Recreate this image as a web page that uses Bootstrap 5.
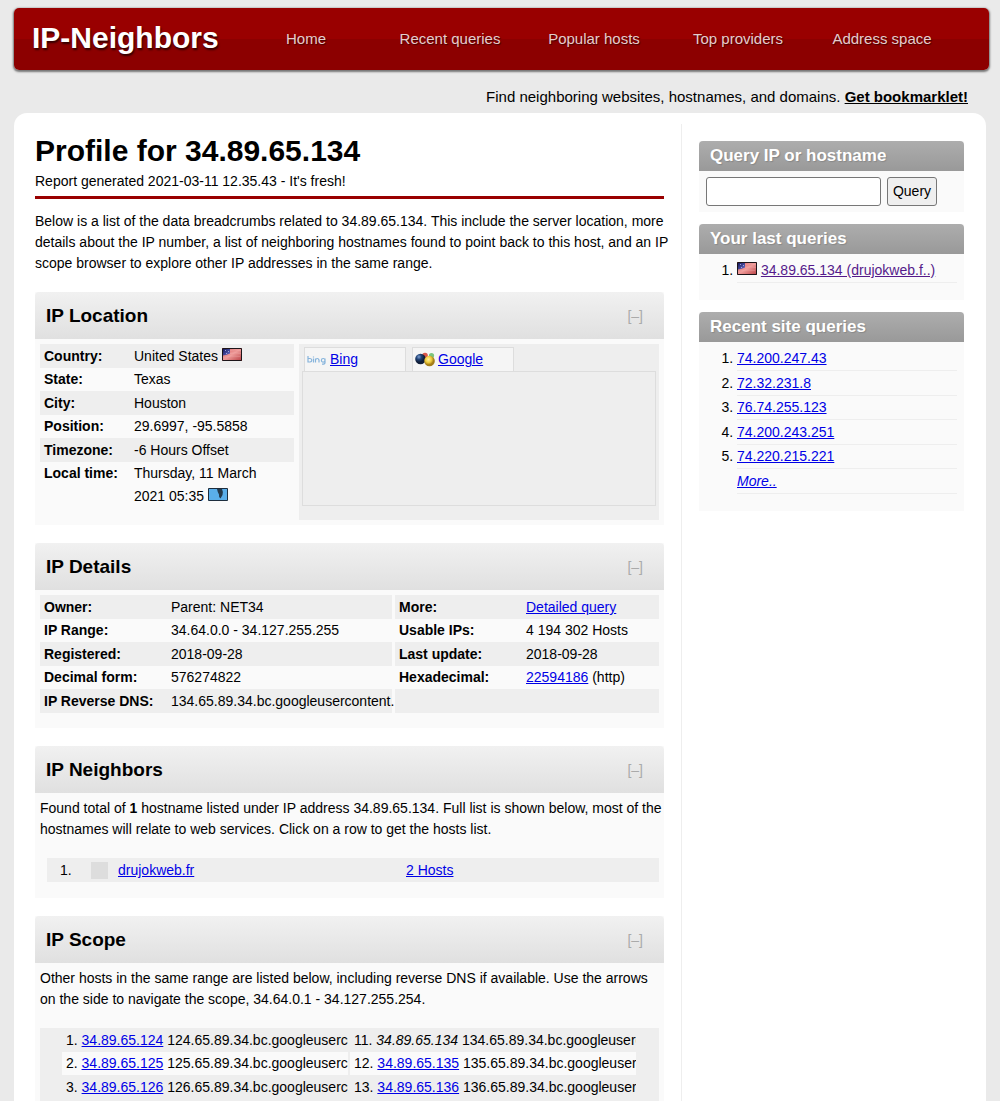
<!DOCTYPE html>
<html lang="en">
<head>
<meta charset="utf-8">
<meta name="viewport" content="width=device-width, initial-scale=1">
<title>IP-Neighbors</title>
<link href="https://cdn.jsdelivr.net/npm/bootstrap@5.3.0/dist/css/bootstrap.min.css" rel="stylesheet">
<style>
body{font-family:"Liberation Sans",Arial,sans-serif;font-size:14px;line-height:21px;color:#000;background:#eaeaea;padding:8px 14px 0}
a{color:#0000e6}
a.seen{color:#551a8b}
.topbar{height:62px;margin-right:-3px;padding:0 35px 2px 18px;border-radius:5px;background:linear-gradient(#990000 50%,#8c0000 50%);box-shadow:0 1px 2px 1px #777}
.brand{width:202px;font-size:30px;line-height:36px;font-weight:bold;color:#fff;text-decoration:none;text-shadow:1px 2px 2px #300}
.topnav a{color:#e6cccc;font-size:15px;padding:0;text-shadow:1px 1px 1px #400}
.topnav a:hover{color:#fff}
.tagline{height:43px;padding:10px 18px 0 0;font-size:15px}
.sheet{background:#fff;border-radius:13px 13px 0 0}
.maincol{padding:20px 17px 0 21px;overflow:hidden}
.sidecol{width:305px;margin-top:11px;padding:17px 22px 0 17px;border-left:1px solid #eee}
h1{font-size:30px;line-height:36px;font-weight:bold;margin:0}
.report{margin:2px 0 12px;padding:0 0 4px;border-bottom:3px solid #990000}
.intro{margin:0 -8px 18px 0}
.panel{background:#fafafa;margin-bottom:18px}
.panel-head{height:47px;padding:0 21px 0 11px;border-radius:4px 4px 0 0;background:linear-gradient(#f1f1f1,#e0e0e0)}
.panel-head h2{font-size:19px;line-height:24px;font-weight:bold;margin:0}
.fold{border:0;background:none;color:#aaa;padding:0;line-height:20px}
.panel-body{padding:5px}
.panel-text{margin:0 -4px 18px 0}
.facts{border-collapse:collapse;table-layout:fixed}
.facts th,.facts td{padding:0 0 0 4px;line-height:23px;vertical-align:top;white-space:nowrap}
.facts td{padding-left:3px}
.facts tr:nth-child(odd) th,.facts tr:nth-child(odd) td{background:#eee;line-height:24px}
.place{width:254px}
.place th{width:91px}
.facts.place tr:last-child td{white-space:normal;line-height:23px;padding-right:20px}
.place tr:last-child td,.place tr:last-child th{background:none}
.details{gap:3px;padding-bottom:15px}
.details th{width:128px}
.d-left{flex:0 0 352px}
.d-right{flex:1 1 0;min-width:0}
.flag{display:inline-block;vertical-align:0}
.mapbox{background:#eee;padding:3px 3px 14px}
.maptabs{padding-left:2px;gap:6px}
.maptab{width:102px;height:24px;border:1px solid #ddd;border-bottom:0;background:#f5f5f5;padding-left:2px;gap:3px}
.mapview{height:135px;border:1px solid #ddd}
.placegap{gap:5px}
.hosts{background:#eee;margin:0 0 11px 7px;height:24px;line-height:24px}
.hosts .num{width:44px;padding-left:13px}
.hosts .thumb{width:17px;height:17px;background:#ddd;margin-right:10px}
.hosts .name{width:288px}
.scopelist{background:#eee;padding:0 23px 0 22px;gap:2px}
.scopelist ol{flex:1 1 0;min-width:0;margin:0;padding:0;list-style:none;counter-reset:n}
.scopelist ol.second{counter-reset:n 10}
.scopelist li{counter-increment:n;height:24px;line-height:24px;white-space:nowrap;overflow:hidden;padding-left:4px}
.scopelist li:nth-child(even){background:#fafafa;height:23px;line-height:23px}
.scopelist li::before{content:counter(n) ". "}
.box-side{background:#fafafa;margin-bottom:12px}
.box-side h2{height:30px;margin:0;padding:0 11px;font-size:17px;line-height:29px;font-weight:bold;color:#fff;border-radius:4px 4px 0 0;background:linear-gradient(#adadad,#999);text-shadow:1px 1px 1px #888}
.askform{padding:6px 7px;gap:6px}
.askform input{width:175px;height:29px;border:1px solid #777;border-radius:3px;background:#fff}
.askform button{width:50px;height:29px;border:1px solid #777;border-radius:3px;background:#efefef;padding:0}
.box-side ol{margin:0;padding:5px 7px 17px 38px}
.box-side li{line-height:23px;border-bottom:1px solid #eee}
.box-side li:nth-child(even){line-height:24px}
.box-side li.plain{list-style:none}
</style>
</head>
<body class="d-flex flex-column min-vh-100">
<header class="topbar d-flex align-items-center">
  <a class="brand" href="#">IP-Neighbors</a>
  <nav class="topnav nav nav-fill flex-nowrap flex-fill">
    <a class="nav-link w-100" href="#">Home</a>
    <a class="nav-link w-100" href="#">Recent queries</a>
    <a class="nav-link w-100" href="#">Popular hosts</a>
    <a class="nav-link w-100" href="#">Top providers</a>
    <a class="nav-link w-100" href="#">Address space</a>
  </nav>
</header>
<p class="tagline d-flex align-items-center justify-content-end m-0"><span>Find neighboring websites, hostnames, and domains. <a href="#" class="fw-bold text-black">Get bookmarklet!</a></span></p>

<svg width="0" height="0" class="position-absolute" aria-hidden="true">
  <defs>
    <linearGradient id="gr" x2="1" y2="1"><stop offset="0" stop-color="#d65c60"/><stop offset=".5" stop-color="#ee9a98"/><stop offset="1" stop-color="#b63b40"/></linearGradient>
    <linearGradient id="gb" x2="1" y2="1"><stop offset="0" stop-color="#16185c"/><stop offset="1" stop-color="#6a70cc"/></linearGradient>
    <radialGradient id="bn" cx=".35" cy=".3"><stop offset="0" stop-color="#7d9fd0"/><stop offset=".5" stop-color="#1f4276"/><stop offset="1" stop-color="#101e38"/></radialGradient>
    <radialGradient id="by" cx=".4" cy=".35"><stop offset="0" stop-color="#fff3a0"/><stop offset=".6" stop-color="#ecc93a"/><stop offset="1" stop-color="#a47d18"/></radialGradient>
    <symbol id="us" viewBox="0 0 20 13"><path fill="url(#gr)" d="M0 0h20v13H0z"/><path stroke="#f6c4c2" stroke-opacity=".25" fill="none" d="M8 2.500q5-1.500 11 0M8 5.500q5-1.500 11 0M1 9.500q8-2.500 17-1"/><path fill="url(#gb)" d="M1 1h7v4.500q-3 1.500-7 2z"/><path fill="#c9cff5" fill-opacity=".7" d="M3 2h1v1H3zM6 3h1v1H6zM4 5h1v1H4z"/><path fill="none" stroke="#1c1418" d="M.5.5h19v12H.5z"/></symbol>
  </defs>
</svg>

<div class="sheet d-flex flex-grow-1">
  <main class="maincol flex-fill d-flex flex-column">
    <h1>Profile for 34.89.65.134</h1>
    <p class="report">Report generated 2021-03-11 12.35.43 - It's fresh!</p>
    <p class="intro">Below is a list of the data breadcrumbs related to 34.89.65.134. This include the server location, more details about the IP number, a list of neighboring hostnames found to point back to this host, and an IP scope browser to explore other IP addresses in the same range.</p>

    <section class="panel">
      <div class="panel-head d-flex align-items-center justify-content-between"><h2>IP Location</h2><button class="fold" type="button">[–]</button></div>
      <div class="panel-body placegap d-flex">
        <div><table class="facts place">
          <tr><th>Country:</th><td>United States <svg class="flag" width="20" height="13" role="img" aria-label="US flag"><use href="#us"/></svg></td></tr>
          <tr><th>State:</th><td>Texas</td></tr>
          <tr><th>City:</th><td>Houston</td></tr>
          <tr><th>Position:</th><td>29.6997, -95.5858</td></tr>
          <tr><th>Timezone:</th><td>-6 Hours Offset</td></tr>
          <tr><th>Local time:</th><td>Thursday, 11 March 2021 05:35 <svg class="flag" width="20" height="13" viewBox="0 0 20 13"><path fill="#5aaeea" stroke="#1d2d3d" d="M.5.5h19v12H.5z"/><path fill="#24394c" d="M9 1h5q1.500 3 .5 6l-2 3.500q-2-1-1.500-4Q9.500 4 9 1z"/></svg></td></tr>
        </table></div>
        <div class="mapbox flex-fill">
          <div class="maptabs d-flex">
            <div class="maptab d-flex align-items-center"><svg width="20" height="10" viewBox="0 0 20 10" fill="none" stroke="#86b4dc" stroke-width="1.200"><path d="M1 1v6h2q1.800 0 1.800-1.700T3 3.500H1M6.500 3.500v4M6.500 1.500v1M8.500 7.500v-4M8.500 5q.5-1.500 1.800-1.500T12 5v2.500M18 3.500v4.300q0 1.500-3 1.400M18 5.300q0-1.800-1.800-1.800T14.400 5.300t1.800 1.800T18 5.300"/></svg><a href="#">Bing</a></div>
            <div class="maptab d-flex align-items-center"><svg width="20" height="16" viewBox="0 0 20 16"><circle cx="10" cy="3.500" r="2.800" fill="#d8574a"/><circle cx="16.500" cy="3.500" r="2.600" fill="#7cc47c"/><circle cx="5.500" cy="7" r="5.300" fill="url(#bn)"/><circle cx="14.500" cy="9" r="5.300" fill="url(#by)"/></svg><a href="#">Google</a></div>
          </div>
          <div class="mapview"></div>
        </div>
      </div>
    </section>

    <section class="panel">
      <div class="panel-head d-flex align-items-center justify-content-between"><h2>IP Details</h2><button class="fold" type="button">[–]</button></div>
      <div class="panel-body details d-flex">
        <div class="d-left"><table class="facts w-100">
          <tr><th>Owner:</th><td>Parent: NET34</td></tr>
          <tr><th>IP Range:</th><td>34.64.0.0 - 34.127.255.255</td></tr>
          <tr><th>Registered:</th><td>2018-09-28</td></tr>
          <tr><th>Decimal form:</th><td>576274822</td></tr>
          <tr><th>IP Reverse DNS:</th><td>134.65.89.34.bc.googleusercontent.</td></tr>
        </table></div>
        <div class="d-right"><table class="facts w-100">
          <tr><th>More:</th><td><a href="#">Detailed query</a></td></tr>
          <tr><th>Usable IPs:</th><td>4 194 302 Hosts</td></tr>
          <tr><th>Last update:</th><td>2018-09-28</td></tr>
          <tr><th>Hexadecimal:</th><td><a href="#">22594186</a> (http)</td></tr>
          <tr><th>&nbsp;</th><td></td></tr>
        </table></div>
      </div>
    </section>

    <section class="panel">
      <div class="panel-head d-flex align-items-center justify-content-between"><h2>IP Neighbors</h2><button class="fold" type="button">[–]</button></div>
      <div class="panel-body">
        <p class="panel-text">Found total of <b>1</b> hostname listed under IP address 34.89.65.134. Full list is shown below, most of the hostnames will relate to web services. Click on a row to get the hosts list.</p>
        <div class="hosts d-flex align-items-center"><span class="num">1.</span><span class="thumb"></span><span class="name"><a href="#">drujokweb.fr</a></span><a href="#">2 Hosts</a></div>
      </div>
    </section>

    <section class="panel flex-grow-1 d-flex flex-column mb-0">
      <div class="panel-head d-flex align-items-center justify-content-between"><h2>IP Scope</h2><button class="fold" type="button">[–]</button></div>
      <div class="panel-body pb-0 flex-grow-1 d-flex flex-column">
        <p class="panel-text">Other hosts in the same range are listed below, including reverse DNS if available. Use the arrows on the side to navigate the scope, 34.64.0.1 - 34.127.255.254.</p>
        <div class="scopelist d-flex flex-grow-1">
          <ol>
            <li><a href="#">34.89.65.124</a> 124.65.89.34.bc.googleusercontent.com</li>
            <li><a href="#">34.89.65.125</a> 125.65.89.34.bc.googleusercontent.com</li>
            <li><a href="#">34.89.65.126</a> 126.65.89.34.bc.googleusercontent.com</li>
          </ol>
          <ol class="second">
            <li><i>34.89.65.134</i> 134.65.89.34.bc.googleusercontent.com</li>
            <li><a href="#">34.89.65.135</a> 135.65.89.34.bc.googleusercontent.com</li>
            <li><a href="#">34.89.65.136</a> 136.65.89.34.bc.googleusercontent.com</li>
          </ol>
        </div>
      </div>
    </section>
  </main>

  <aside class="sidecol flex-shrink-0">
    <section class="box-side">
      <h2><label for="q">Query IP or hostname</label></h2>
      <form class="askform d-flex"><input id="q" type="text"><button type="submit">Query</button></form>
    </section>
    <section class="box-side">
      <h2>Your last queries</h2>
      <ol><li><svg class="flag" width="20" height="13" role="img" aria-label="US flag"><use href="#us"/></svg> <a class="seen" href="#">34.89.65.134 (drujokweb.f..)</a></li></ol>
    </section>
    <section class="box-side">
      <h2>Recent site queries</h2>
      <ol>
        <li><a href="#">74.200.247.43</a></li>
        <li><a href="#">72.32.231.8</a></li>
        <li><a href="#">76.74.255.123</a></li>
        <li><a href="#">74.200.243.251</a></li>
        <li><a href="#">74.220.215.221</a></li>
        <li class="plain"><a href="#"><i>More..</i></a></li>
      </ol>
    </section>
  </aside>
</div>
<script src="https://cdn.jsdelivr.net/npm/bootstrap@5.3.0/dist/js/bootstrap.bundle.min.js"></script>
</body>
</html>
